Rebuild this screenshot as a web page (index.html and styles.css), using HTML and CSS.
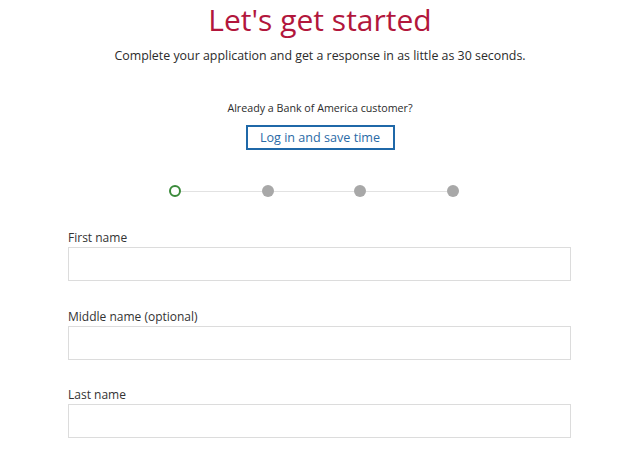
FILE: index.html
```html
<!DOCTYPE html>
<html lang="en">
<head>
<meta charset="utf-8">
<title>Let's get started</title>
<link rel="stylesheet" href="styles.css">
</head>
<body>
<main class="page">
  <h1 class="title">Let's get started</h1>
  <p class="sub">Complete your application and get a response in as little as 30 seconds.</p>
  <p class="already">Already a Bank of America customer?</p>
  <div class="btn-row"><a class="login-btn" href="#">Log in and save time</a></div>
  <div class="stepper">
    <span class="dot dot-current"></span>
    <span class="line"></span>
    <span class="dot"></span>
    <span class="line"></span>
    <span class="dot"></span>
    <span class="line"></span>
    <span class="dot"></span>
  </div>
  <form class="form">
    <div class="field">
      <label class="label" for="fn">First name</label>
      <input class="input" id="fn" type="text">
    </div>
    <div class="field">
      <label class="label" for="mn">Middle name (optional)</label>
      <input class="input" id="mn" type="text">
    </div>
    <div class="field">
      <label class="label" for="ln">Last name</label>
      <input class="input" id="ln" type="text">
    </div>
  </form>
</main>
</body>
</html>
```
FILE: styles.css
```css
html, body {
  margin: 0;
  padding: 0;
  background: #fff;
}
body {
  font-family: "Open Sans", "Liberation Sans", sans-serif;
  color: #333;
}
.page {
  width: 504px;
  margin: 0 auto;
  display: flex;
  flex-direction: column;
}
.title {
  margin: 3px 0 0;
  font-size: 30px;
  line-height: 34px;
  font-weight: 400;
  color: #b2163c;
  text-align: center;
}
.sub {
  margin: 10px 0 0;
  font-size: 12.4px;
  line-height: 18px;
  text-align: center;
  color: #2b2b2b;
}
.already {
  margin: 35px 0 0;
  font-size: 10.7px;
  line-height: 16px;
  text-align: center;
  color: #2b2b2b;
}
.btn-row {
  margin-top: 9px;
  display: flex;
  justify-content: center;
}
.login-btn {
  box-sizing: border-box;
  width: 149px;
  height: 25px;
  border: 2px solid #1f68a8;
  display: flex;
  align-items: center;
  justify-content: center;
  font-size: 12.6px;
  color: #2a6aa6;
  text-decoration: none;
}
.stepper {
  margin: 35px 0 0 101px;
  width: 290px;
  display: flex;
  align-items: center;
}
.dot {
  box-sizing: border-box;
  width: 12px;
  height: 12px;
  border-radius: 50%;
  background: #a8a8a8;
  flex: none;
}
.dot-current {
  background: #fff;
  border: 2px solid #3a8a3a;
}
.line {
  flex: 1;
  height: 1px;
  background: #e2e2e2;
}
.form {
  margin-top: 33px;
  display: flex;
  flex-direction: column;
  gap: 27.5px;
}
.field {
  display: flex;
  flex-direction: column;
}
.label {
  font-size: 12px;
  line-height: 16px;
  font-weight: 500;
  color: #333;
  margin-bottom: 1px;
}
.input {
  box-sizing: border-box;
  width: 503px;
  height: 34px;
  margin: 0;
  border: 1px solid #dcdcdc;
  background: #fff;
  font: inherit;
}
```
